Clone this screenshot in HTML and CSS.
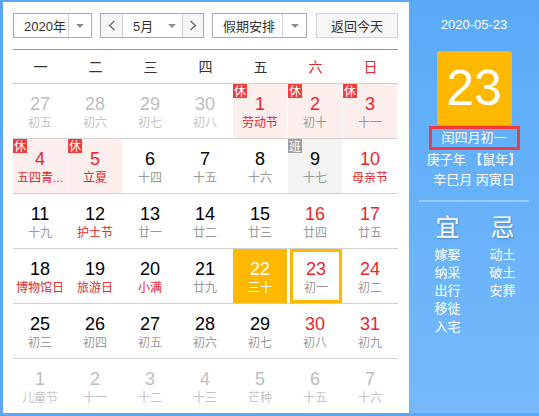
FILE: index.html
```html
<!DOCTYPE html>
<html lang="zh-CN">
<head>
<meta charset="utf-8">
<title>万年历</title>
<link rel="stylesheet" href="styles.css">
</head>
<body>
<div class="calendar">
  <div class="main">
    <div class="toolbar">
      <div class="select year">
        <span class="sel-text">2020年</span>
        <span class="sel-arrow"><i class="tri"></i></span>
      </div>
      <div class="month-group">
        <span class="nav"><svg width="8" height="11" viewBox="0 0 8 11"><polyline points="6.5,1 1.5,5.5 6.5,10" fill="none" stroke="#666" stroke-width="1.2"/></svg></span>
        <span class="month-text">5月<i class="tri"></i></span>
        <span class="nav"><svg width="8" height="11" viewBox="0 0 8 11"><polyline points="1.5,1 6.5,5.5 1.5,10" fill="none" stroke="#666" stroke-width="1.2"/></svg></span>
      </div>
      <div class="select holiday">
        <span class="sel-text">假期安排</span>
        <span class="sel-arrow"><i class="tri"></i></span>
      </div>
      <div class="today-btn">返回今天</div>
    </div>

    <div class="weekdays">
      <span>一</span><span>二</span><span>三</span><span>四</span><span>五</span><span class="wkend">六</span><span class="wkend">日</span>
    </div>

    <div class="weeks">
      <div class="week">
        <div class="day other"><span class="num">27</span><span class="lunar">初五</span></div>
        <div class="day other"><span class="num">28</span><span class="lunar">初六</span></div>
        <div class="day other"><span class="num">29</span><span class="lunar">初七</span></div>
        <div class="day other"><span class="num">30</span><span class="lunar">初八</span></div>
        <div class="day hol red"><i class="badge">休</i><span class="num">1</span><span class="lunar fest">劳动节</span></div>
        <div class="day hol red"><i class="badge">休</i><span class="num">2</span><span class="lunar">初十</span></div>
        <div class="day hol red"><i class="badge">休</i><span class="num">3</span><span class="lunar">十一</span></div>
      </div>
      <div class="week">
        <div class="day hol red"><i class="badge">休</i><span class="num">4</span><span class="lunar fest">五四青...</span></div>
        <div class="day hol red"><i class="badge">休</i><span class="num">5</span><span class="lunar fest">立夏</span></div>
        <div class="day"><span class="num">6</span><span class="lunar">十四</span></div>
        <div class="day"><span class="num">7</span><span class="lunar">十五</span></div>
        <div class="day"><span class="num">8</span><span class="lunar">十六</span></div>
        <div class="day work"><i class="badge ban">班</i><span class="num">9</span><span class="lunar">十七</span></div>
        <div class="day red"><span class="num">10</span><span class="lunar fest">母亲节</span></div>
      </div>
      <div class="week">
        <div class="day"><span class="num">11</span><span class="lunar">十九</span></div>
        <div class="day"><span class="num">12</span><span class="lunar fest">护士节</span></div>
        <div class="day"><span class="num">13</span><span class="lunar">廿一</span></div>
        <div class="day"><span class="num">14</span><span class="lunar">廿二</span></div>
        <div class="day"><span class="num">15</span><span class="lunar">廿三</span></div>
        <div class="day red"><span class="num">16</span><span class="lunar">廿四</span></div>
        <div class="day red"><span class="num">17</span><span class="lunar">廿五</span></div>
      </div>
      <div class="week">
        <div class="day"><span class="num">18</span><span class="lunar fest">博物馆日</span></div>
        <div class="day"><span class="num">19</span><span class="lunar fest">旅游日</span></div>
        <div class="day"><span class="num">20</span><span class="lunar fest">小满</span></div>
        <div class="day"><span class="num">21</span><span class="lunar">廿九</span></div>
        <div class="day today"><span class="num">22</span><span class="lunar">三十</span></div>
        <div class="day red selected"><span class="num">23</span><span class="lunar">初一</span></div>
        <div class="day red"><span class="num">24</span><span class="lunar">初二</span></div>
      </div>
      <div class="week">
        <div class="day"><span class="num">25</span><span class="lunar">初三</span></div>
        <div class="day"><span class="num">26</span><span class="lunar">初四</span></div>
        <div class="day"><span class="num">27</span><span class="lunar">初五</span></div>
        <div class="day"><span class="num">28</span><span class="lunar">初六</span></div>
        <div class="day"><span class="num">29</span><span class="lunar">初七</span></div>
        <div class="day red"><span class="num">30</span><span class="lunar">初八</span></div>
        <div class="day red"><span class="num">31</span><span class="lunar">初九</span></div>
      </div>
      <div class="week">
        <div class="day other"><span class="num">1</span><span class="lunar">儿童节</span></div>
        <div class="day other"><span class="num">2</span><span class="lunar">十一</span></div>
        <div class="day other"><span class="num">3</span><span class="lunar">十二</span></div>
        <div class="day other"><span class="num">4</span><span class="lunar">十三</span></div>
        <div class="day other"><span class="num">5</span><span class="lunar">芒种</span></div>
        <div class="day other"><span class="num">6</span><span class="lunar">十五</span></div>
        <div class="day other"><span class="num">7</span><span class="lunar">十六</span></div>
      </div>
    </div>
  </div>

  <div class="side">
    <div class="side-date">2020-05-23</div>
    <div class="big-day">23</div>
    <div class="lunar-date">闰四月初一</div>
    <div class="side-line">庚子年 【鼠年】</div>
    <div class="side-line">辛巳月 丙寅日</div>
    <div class="divider"></div>
    <div class="yiji">
      <div class="yiji-col">
        <div class="yiji-title">宜</div>
        <div class="yiji-item">嫁娶</div>
        <div class="yiji-item">纳采</div>
        <div class="yiji-item">出行</div>
        <div class="yiji-item">移徙</div>
        <div class="yiji-item">入宅</div>
      </div>
      <div class="yiji-col">
        <div class="yiji-title">忌</div>
        <div class="yiji-item">动土</div>
        <div class="yiji-item">破土</div>
        <div class="yiji-item">安葬</div>
      </div>
    </div>
  </div>
</div>
</body>
</html>
```

FILE: styles.css
```css
* { box-sizing: border-box; }

html, body {
  margin: 0;
  padding: 0;
  background: #fff;
}

body {
  font-family: "Liberation Sans", "Noto Sans CJK SC", sans-serif;
  color: #333;
}

.calendar {
  width: 539px;
  height: 416px;
  display: flex;
  border-style: solid;
  border-color: #5aa8f5;
  border-width: 2px 0 3px 3px;
  background: #fff;
}

.main {
  width: 406px;
  padding: 11px 0 0 10px;
}

/* toolbar */
.toolbar {
  display: flex;
  width: 385px;
  height: 25px;
  font-size: 13px;
  color: #333;
}

.select, .month-group {
  display: flex;
  height: 25px;
  border: 1px solid #aaa;
  background: #fff;
}

.year { width: 79px; }
.holiday { width: 95px; margin-left: 8px; }
.month-group { width: 104px; margin-left: 8px; }

.sel-text {
  display: flex;
  align-items: center;
  padding-left: 10px;
  border-right: 1px solid #d4d4d4;
}
.year .sel-text { width: 55px; }
.holiday .sel-text { width: 70px; }

.sel-arrow {
  flex: 1;
  display: flex;
  align-items: center;
  justify-content: center;
}

.tri {
  display: block;
  width: 0;
  height: 0;
  border-left: 4px solid transparent;
  border-right: 4px solid transparent;
  border-top: 4px solid #8c8c8c;
}

.nav {
  width: 21px;
  display: flex;
  align-items: center;
  justify-content: center;
  background: #f6f6f6;
}
.nav:last-child { flex: 1; }

.month-text {
  width: 61px;
  display: flex;
  align-items: center;
  padding-left: 10px;
  border-left: 1px solid #d4d4d4;
  border-right: 1px solid #d4d4d4;
}
.month-text .tri { margin-left: 15px; }

.today-btn {
  margin-left: 9px;
  width: 82px;
  height: 25px;
  display: flex;
  align-items: center;
  justify-content: center;
  border: 1px solid #d2d2d2;
  background: #f6f6f6;
}

/* weekdays */
.weekdays {
  width: 385px;
  margin-top: 11px;
  border-top: 1px solid #5ba3ec;
  border-bottom: 1px solid #cfcfcf;
  height: 35px;
  display: flex;
  font-size: 14px;
  color: #333;
}
.weekdays span {
  width: 55px;
  text-align: center;
  line-height: 33px;
  font-family: "Noto Sans CJK SC", sans-serif;
}
.weekdays .wkend { color: #e8262c; }

/* days */
.weeks { width: 385px; }

.week {
  display: flex;
  border-bottom: 1px solid #d2d2d2;
}
.week:last-child { border-bottom: 0; }

.day {
  position: relative;
  width: 54px;
  height: 54px;
  margin-right: 1px;
  display: flex;
  flex-direction: column;
  align-items: center;
  padding-top: 10px;
}

.num {
  font-size: 18px;
  line-height: 21px;
  color: #000;
}

.lunar {
  text-align: center;
  font-size: 12px;
  line-height: 16px;
  color: #999;
  white-space: nowrap;
}

.lunar.fest { color: #e8262c; }
.red .num { color: #e8262c; }

.hol { background: #fdeeee; }
.work { background: #f3f3f3; }

.other .num { color: #bdbdbd; }
.other .lunar { color: #c4c4c4; }

.today { background: #ffb800; }
.today .num, .today .lunar { color: #fff; }

.selected {
  width: 52px;
  margin-left: 2px;
  box-shadow: inset 0 0 0 3px #ffb800;
}

.badge {
  position: absolute;
  left: 0;
  top: 0;
  width: 14px;
  height: 14px;
  background: #f23c3c;
  color: #fff;
  font-style: normal;
  font-size: 12px;
  line-height: 14px;
  text-align: center;
  font-family: "Noto Sans CJK SC", sans-serif;
}
.badge.ban { background: #a0a0a0; }

/* side panel */
.side {
  width: 130px;
  background: linear-gradient(#5aaaf8, #76b9fb);
  color: #fff;
  text-align: center;
  padding-top: 13px;
  font-size: 13px;
}

.side-date {
  line-height: 20px;
  font-size: 13px;
}

.big-day {
  width: 75px;
  height: 74px;
  margin: 16px auto 0;
  background: #ffb800;
  border-radius: 3px;
  font-size: 50px;
  line-height: 74px;
  color: #fff;
}

.lunar-date {
  width: 91px;
  height: 24px;
  margin: 1px auto 0;
  border: 3px solid #f03a3c;
  line-height: 18px;
  font-size: 13px;
}

.side-line {
  line-height: 20px;
  font-size: 13px;
}

.divider {
  width: 110px;
  height: 2px;
  margin: 10px auto 0;
  background: rgba(255, 255, 255, 0.35);
}

.yiji {
  display: flex;
  padding-left: 11px;
  margin-top: 11px;
}

.yiji-col { width: 55px; }

.yiji-title {
  font-size: 24px;
  line-height: 30px;
  margin-bottom: 3px;
  text-shadow: 1px 1px 2px rgba(0, 0, 0, 0.25);
}

.yiji-item {
  font-size: 13px;
  line-height: 18px;
}
```
